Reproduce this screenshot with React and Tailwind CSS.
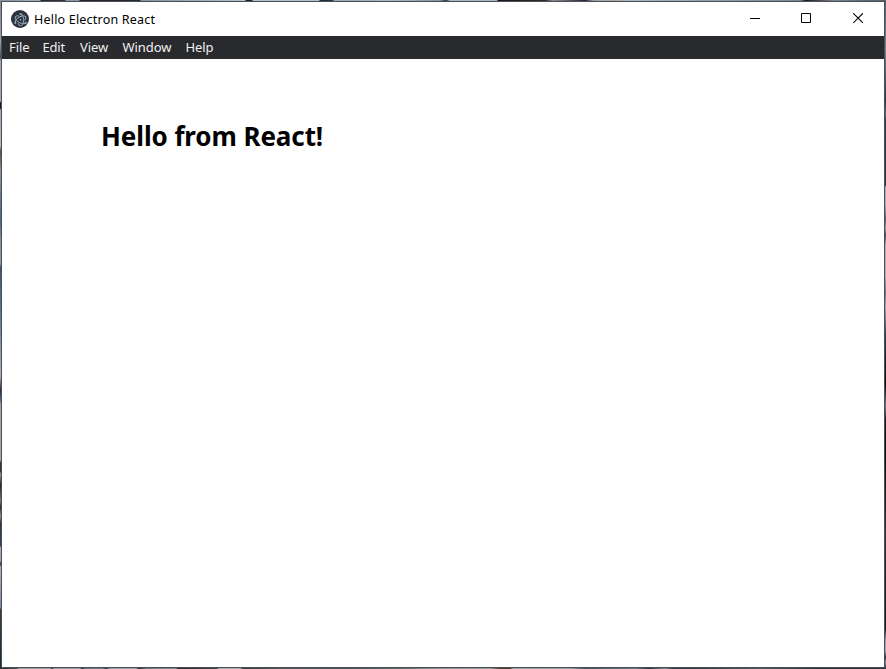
import React from "react";
import { SiElectron } from "react-icons/si";

function ElectronLogo() {
  return (
    <span className="flex size-[18px] shrink-0 items-center justify-center rounded-full bg-[#2f323d]">
      <SiElectron className="size-[13px] text-[#a9d0dc]" style={{ strokeWidth: 0.6 }} />
    </span>
  );
}

function TitleBar() {
  return (
    <header className="flex h-[34px] shrink-0 items-center bg-white pl-[9px]">
      <ElectronLogo />
      <h1 className="ml-[5px] pt-px text-[12.5px] leading-4 tracking-[0.2px] text-black">Hello Electron React</h1>
      <div className="ml-auto flex h-full items-center">
        <button aria-label="Minimize" className="flex h-full w-[51px] items-center justify-center">
          <svg width="11" height="12" shapeRendering="crispEdges"><path d="M0 5h10v1H0z" /></svg>
        </button>
        <button aria-label="Maximize" className="flex h-full w-[51px] items-center justify-center">
          <svg width="11" height="12" fill="none" stroke="#000"><path d="M.5 .5h9v9h-9z" /></svg>
        </button>
        <button aria-label="Close" className="flex h-full w-[52px] items-center justify-center">
          <svg width="11" height="12" fill="none" stroke="#000" strokeWidth="1.1"><path d="M.3 .3l9.600 9.600M9.900 .3l-9.600 9.600" /></svg>
        </button>
      </div>
    </header>
  );
}

function MenuBar() {
  return (
    <nav className="flex h-[23px] shrink-0 items-center bg-[#292a2d] pl-[7px] text-[13px] leading-[17px] text-[#f1f1f1]">
      <span className="w-[33.5px] tracking-[-0.1px]">File</span>
      <span className="w-[37.5px] tracking-[-0.2px]">Edit</span>
      <span className="w-[42.5px] tracking-[-0.1px]">View</span>
      <span className="w-[63px] tracking-[-0.05px]">Window</span>
      <span className="tracking-[-0.1px]">Help</span>
    </nav>
  );
}

export default function App() {
  return (
    <div className="grid h-[669px] w-[886px] grid-cols-[1px_884px_1px] grid-rows-[1px_667px_1px] overflow-hidden bg-[#343d46] font-['Noto_Sans','Open_Sans',sans-serif]">
      <div className="col-span-3 bg-[linear-gradient(90deg,#87939d_0px,#a4afb7_40px,#23252e_41px,#353842_65px,#8d98a2_66px,#8d98a2_79px,#22232a_80px,#252a31_140px,#8195a2_141px,#b5c1c8_245px,#22242d_246px,#22242d_252px,#b5c1c8_253px,#b5c1c8_319px,#1b2634_320px,#263747_333px,#92a8b5_334px,#a9b9bf_390px,#8295a1_440px,#233746_446px,#a5b9c3_450px,#a5b9c3_497px,#16171c_498px,#30292a_545px,#8d8c91_553px,#252733_585px,#9ba6ab_594px,#b3ad9b_620px,#aab9c1_625px,#748996_800px,#171b20_806px,#80858b_835px,#617985_850px,#52626e_886px)]" />
      <div className="bg-[linear-gradient(180deg,#7f8b95_0px,#98a3ae_40px,#435361_56px,#a0a9b4_60px,#a0a9b4_100px,#101623_102px,#101623_107px,#a5acb8_109px,#b0b4bd_145px,#57514f_150px,#817d7e_165px,#8795a2_170px,#4e6478_220px,#8794a0_240px,#8a9ca7_263px,#435468_266px,#5e768a_310px,#a9b4c0_375px,#222d3d_389px,#4b6274_398px,#a1a6b1_404px,#a1a6b1_459px,#3c2c25_462px,#392f29_470px,#969ba5_473px,#20222c_484px,#777b84_500px,#24272f_506px,#8f929b_515px,#2a3543_522px,#35465a_545px,#adb3be_547px,#9aa2af_560px,#202b3c_563px,#aeb5c0_566px,#7d8ba0_607px,#344046_608px,#172a35_667px)]" />
      <div className="flex min-w-0 flex-col border border-[#4b4f57] bg-white">
        <TitleBar />
        <MenuBar />
        <main className="flex-1 bg-white pl-[99px] pt-[59px]">
          <h2 className="text-[26px] font-bold leading-9 tracking-[-0.09px] text-black">Hello from React!</h2>
        </main>
      </div>
      <div className="bg-[linear-gradient(180deg,#526471_0px,#71828d_50px,#24323c_100px,#536776_113px,#283742_120px,#25323a_184px,#a6adb8_186px,#a6adb8_203px,#555d69_218px,#999ea8_227px,#454c5b_234px,#a9adb8_245px,#a9adb8_275px,#6b7387_292px,#a0a7b2_305px,#263848_336px,#080b0d_384px,#6c7989_405px,#15191d_419px,#090b0c_450px,#2b3035_530px,#141a22_628px,#9295a9_638px,#a6aab7_650px,#1e2937_656px,#8791a2_661px,#33404c_667px)]" />
      <div className="col-span-3 bg-[linear-gradient(90deg,#303036_0px,#4b4c4d_17px,#9ba0a4_19px,#9ba0a4_50px,#303239_52px,#969ba5_54px,#969ba5_80px,#22252f_82px,#697581_85px,#727e8b_103px,#2a303c_106px,#9aa4ae_110px,#9aa4ae_136px,#22222a_139px,#6e7983_146px,#7c8790_176px,#262426_178px,#3f4042_217px,#a9b0b4_219px,#a9b0b4_240px,#37383d_243px,#50555a_280px,#46545b_350px,#596a6b_400px,#888f91_437px,#969c9c_490px,#51392e_500px,#44362e_510px,#9ca5a5_513px,#93a0a4_570px,#405560_585px,#697c87_636px,#252b39_649px,#838b95_665px,#2c3644_673px,#303a43_700px,#4f5962_760px,#252d35_820px,#2a3036_886px)]" />
    </div>
  );
}
